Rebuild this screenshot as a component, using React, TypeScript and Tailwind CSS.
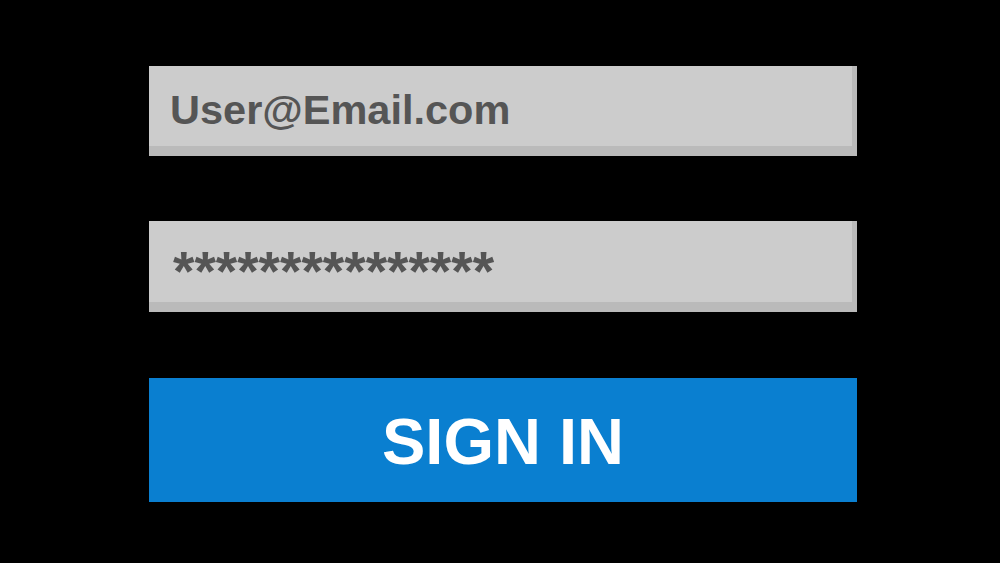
export default function App() {
  return (
    <div className="w-[1000px] h-[563px] bg-black overflow-hidden font-['Liberation_Sans',Arial,sans-serif]">
      <div className="ml-[149px] w-[708px] pt-[66px] flex flex-col">
        {/* Email field */}
        <div className="h-[90px] bg-[#cccccc] border-r-[5px] border-b-[10px] border-[#bababa] flex items-center pl-[21px]">
          <span className="text-[41.5px] font-bold text-[#555555] leading-none pt-[8px]">User@Email.com</span>
        </div>

        {/* Password field */}
        <div className="mt-[65px] h-[91px] bg-[#cccccc] border-r-[5px] border-b-[10px] border-[#bababa] flex items-center pl-[24px]">
          <span className="text-[55px] font-bold text-[#555555] leading-none pt-[20px]">***************</span>
        </div>

        {/* Sign in button */}
        <button className="mt-[66px] h-[124px] bg-[#0a7fd0] flex items-center justify-center">
          <span className="text-[65px] font-bold text-white leading-none pt-[2px]">SIGN IN</span>
        </button>
      </div>
    </div>
  );
}
